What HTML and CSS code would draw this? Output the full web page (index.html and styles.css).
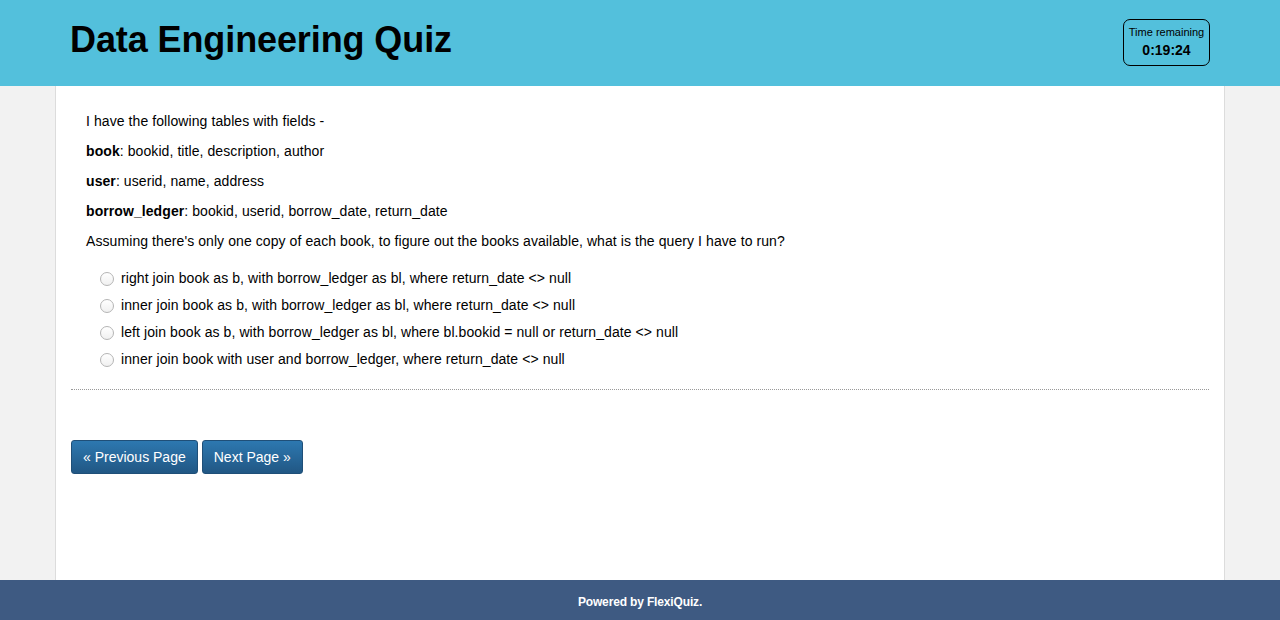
FILE: index.html
```html
<!DOCTYPE html>
<html>
<head>
<meta charset="utf-8">
<link rel="stylesheet" href="styles.css">
</head>
<body>
<div class="page">
  <header class="header">
    <div class="header-inner">
      <h1 class="title">Data Engineering Quiz</h1>
      <div class="timer">
        <div class="timer-label">Time remaining</div>
        <div class="timer-value">0:19:24</div>
      </div>
    </div>
  </header>
  <main class="main">
    <div class="container">
      <div class="question">
        <p>I have the following tables with fields -</p>
        <p><b>book</b>: bookid, title, description, author</p>
        <p><b>user</b>: userid, name, address</p>
        <p><b>borrow_ledger</b>: bookid, userid, borrow_date, return_date</p>
        <p>Assuming there's only one copy of each book, to figure out the books available, what is the query I have to run?</p>
        <ul class="options">
          <li><span class="radio"></span>right join book as b, with borrow_ledger as bl, where return_date &lt;&gt; null</li>
          <li><span class="radio"></span>inner join book as b, with borrow_ledger as bl, where return_date &lt;&gt; null</li>
          <li><span class="radio"></span>left join book as b, with borrow_ledger as bl, where bl.bookid = null or return_date &lt;&gt; null</li>
          <li><span class="radio"></span>inner join book with user and borrow_ledger, where return_date &lt;&gt; null</li>
        </ul>
      </div>
      <div class="nav">
        <button class="btn">« Previous Page</button>
        <button class="btn">Next Page »</button>
      </div>
    </div>
  </main>
  <footer class="footer">Powered by FlexiQuiz.</footer>
</div>
</body>
</html>
```
FILE: styles.css
```css
* { box-sizing: border-box; }
html, body { margin: 0; padding: 0; height: 100%; }
body {
  font-family: "Liberation Sans", Arial, sans-serif;
  color: #000;
  background: #f2f2f2;
}
.page {
  display: flex;
  flex-direction: column;
  height: 620px;
}
.header {
  background: #53c0dc;
  height: 86px;
  flex: none;
}
.header-inner {
  width: 1170px;
  margin: 0 auto;
  padding: 0 15px;
  display: flex;
  justify-content: space-between;
  align-items: flex-start;
}
.title {
  margin: 18px 0 0 0;
  font-size: 36px;
  font-weight: bold;
  line-height: 44px;
  letter-spacing: -0.1px;
}
.timer {
  margin-top: 19px;
  width: 87px;
  height: 47px;
  border: 1px solid #000;
  border-radius: 7px;
  text-align: center;
  padding-top: 6px;
}
.timer-label {
  font-size: 11px;
  line-height: 13px;
}
.timer-value {
  font-size: 14px;
  font-weight: bold;
  line-height: 17px;
  margin-top: 3px;
}
.main {
  flex: 1;
}
.container {
  width: 1170px;
  margin: 0 auto;
  height: 100%;
  background: #fff;
  border-left: 1px solid #dcdcdc;
  border-right: 1px solid #dcdcdc;
  padding: 27px 15px 0 15px;
}
.question {
  padding: 0 15px;
  font-size: 14px;
  letter-spacing: 0.08px;
  border-bottom: 1px dotted #999;
  padding-bottom: 16px;
}
.question p {
  margin: 0 0 13px 0;
  line-height: 17px;
}
.options {
  list-style: none;
  margin: 0;
  padding: 2px 0 0 14px;
}
.options li {
  display: flex;
  align-items: center;
  height: 27px;
  line-height: 17px;
}
.radio {
  width: 14px;
  height: 14px;
  border: 1px solid #b5b5b5;
  border-radius: 50%;
  background: linear-gradient(#fff, #f0f0f0);
  margin-right: 7px;
  flex: none;
}
.nav {
  padding-top: 50px;
  display: flex;
  gap: 4px;
}
.btn {
  font-family: "Liberation Sans", Arial, sans-serif;
  font-size: 14px;
  color: #fff;
  height: 34px;
  padding: 0 11px;
  border: 1px solid #1f4f78;
  border-radius: 3px;
  background: linear-gradient(#2d78b0, #215784);
  cursor: pointer;
}
.footer {
  flex: none;
  height: 40px;
  background: #3e5a82;
  color: #fff;
  font-size: 12px;
  font-weight: bold;
  text-align: center;
  line-height: 45px;
  letter-spacing: -0.15px;
}
```
